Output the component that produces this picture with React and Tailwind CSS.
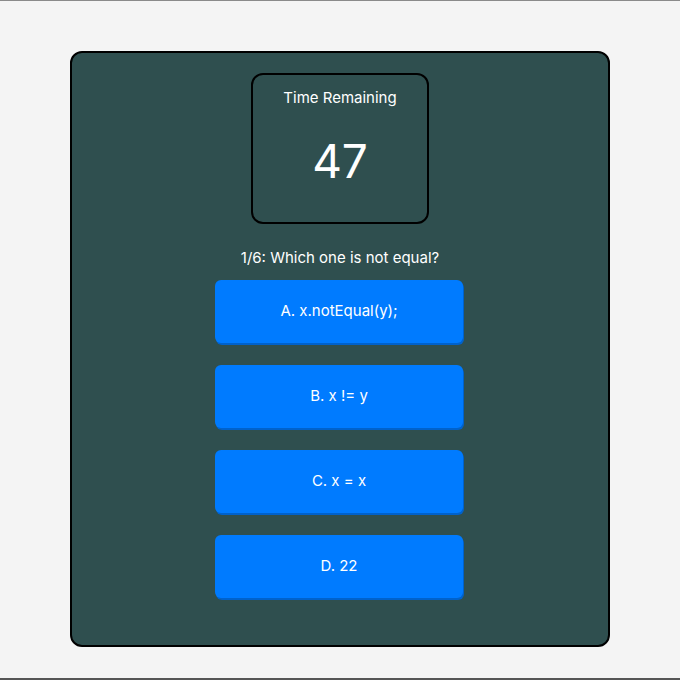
export default function App() {
  const options = ["A. x.notEqual(y);", "B. x != y", "C. x = x", "D. 22"];
  return (
    <div
      className="w-[680px] h-[680px] bg-[#f4f4f4] border-t border-t-[#8a8a8a] border-b-2 border-b-[#555] box-border pt-[50px]"
      style={{ fontFamily: "Inter, 'Noto Sans', sans-serif" }}
    >
      <div className="ml-[70px] w-[540px] h-[596px] bg-[#2f4f4f] border-2 border-black rounded-xl flex flex-col items-center pt-[20px] text-white">
        <div className="w-[178px] h-[151px] border-2 border-black rounded-xl flex flex-col items-center">
          <div className="mt-[13px] text-[15px] leading-[20px]">Time Remaining</div>
          <div className="mt-[25px] text-[46px] leading-[56px]">47</div>
        </div>
        <div className="mt-[23px] text-[15px] leading-[22px]">1/6: Which one is not equal?</div>
        <div className="mt-[11px] mr-[2px] flex flex-col gap-[22px]">
          {options.map((o) => (
            <div
              key={o}
              className="w-[248px] h-[63px] bg-[#007bff] rounded-md flex items-center justify-center text-[15px] shadow-[1px_2px_0_#0062cc]"
            >
              {o}
            </div>
          ))}
        </div>
      </div>
    </div>
  );
}
